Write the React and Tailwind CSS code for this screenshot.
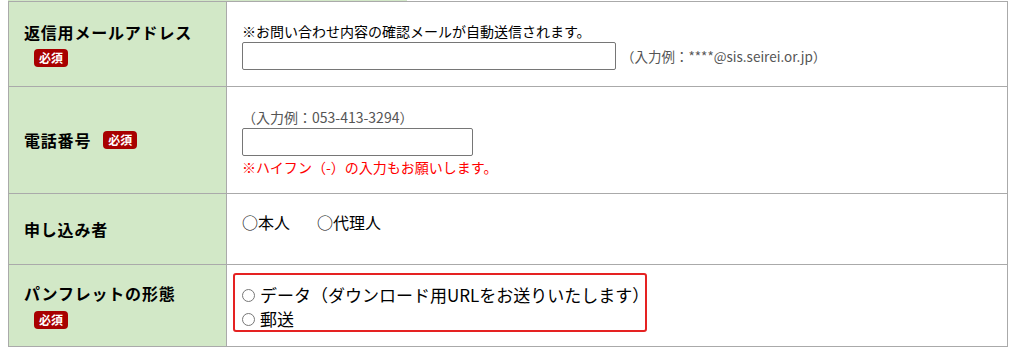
import React from 'react';

const font = { fontFamily: '"Noto Sans CJK JP", "Noto Sans", sans-serif' };

function Badge({ className = '' }) {
  return (
    <span className={`inline-block rounded-[4px] bg-[#a80000] px-[5px] text-[12px] leading-[18px] font-bold text-white ${className}`}>
      必須
    </span>
  );
}

function Radio() {
  return <span className="inline-block h-[13px] w-[13px] shrink-0 rounded-full border border-[#777] bg-white" />;
}

function Row({ label, children, className = '', first }) {
  return (
    <div className={`flex ${first ? '' : 'border-t border-[#aaa]'} ${className}`}>
      <div className="flex w-[218px] shrink-0 items-center border-r border-[#aaa] bg-[#d2e8c7] pl-[15px]">
        {label}
      </div>
      <div className="flex-1 bg-white">{children}</div>
    </div>
  );
}

export default function App() {
  return (
    <div className="min-h-[348px] bg-white text-black" style={font}>
      <div className="ml-2 w-[1000px]">
        <div className="h-px w-[399px] bg-[#d2e8c7]" />
        <div className="border border-[#aaa]">
          {/* 返信用メールアドレス */}
          <Row
            first
            className="h-[84px]"
            label={
              <div className="text-[16px] leading-[24px] font-bold tracking-[0.05em]">
                <div>返信用メールアドレス</div>
                <Badge className="ml-[10px] mt-[5px] tracking-normal" />
              </div>
            }
          >
            <div className="pl-[15px] pt-5">
              <div className="text-[14px] leading-[18px]">※お問い合わせ内容の確認メールが自動送信されます。</div>
              <div className="mt-[2px] flex items-center">
                <div className="h-[28px] w-[374px] rounded-[2px] border border-[#767676]" />
                <span className="ml-[5px] text-[13.5px] text-[#555]">（入力例：****@sis.seirei.or.jp）</span>
              </div>
            </div>
          </Row>

          {/* 電話番号 */}
          <Row
            className="h-[107px]"
            label={
              <div className="flex items-center text-[16px] leading-[24px] font-bold tracking-[0.05em]">
                <span>電話番号</span>
                <Badge className="ml-[12px] tracking-normal" />
              </div>
            }
          >
            <div className="pl-[15px] pt-[21px]">
              <div className="text-[14px] leading-[18px] text-[#555]">（入力例：053-413-3294）</div>
              <div className="mt-[2px] h-[28px] w-[231px] rounded-[2px] border border-[#767676]" />
              <div className="mt-[2px] text-[14px] leading-[18px] text-[#ff0000]">※ハイフン（-）の入力もお願いします。</div>
            </div>
          </Row>

          {/* 申し込み者 */}
          <Row
            className="h-[71px]"
            label={<div className="text-[16px] leading-[24px] font-bold tracking-[0.05em]">申し込み者</div>}
          >
            <div className="flex pl-[15px] pt-4 text-[16px] leading-[24px]">
              <span>○本人</span>
              <span className="ml-[27px]">○代理人</span>
            </div>
          </Row>

          {/* パンフレットの形態 */}
          <Row
            className="h-[82px]"
            label={
              <div className="text-[16px] leading-[24px] font-bold tracking-[0.05em]">
                <div>パンフレットの形態</div>
                <Badge className="ml-[10px] mt-[6px] tracking-normal" />
              </div>
            }
          >
            <div className="pl-[6px] pt-2">
              <div className="h-[59px] w-[414px] rounded-[3px] border-2 border-[#e52222] pl-[7px] pt-[8px] text-[17px] leading-[24px]">
                <div className="flex items-center gap-[5px]">
                  <Radio />
                  <span className="whitespace-nowrap">データ（ダウンロード用URLをお送りいたします）</span>
                </div>
                <div className="flex items-center gap-[5px]">
                  <Radio />
                  <span>郵送</span>
                </div>
              </div>
            </div>
          </Row>
        </div>
      </div>
    </div>
  );
}
